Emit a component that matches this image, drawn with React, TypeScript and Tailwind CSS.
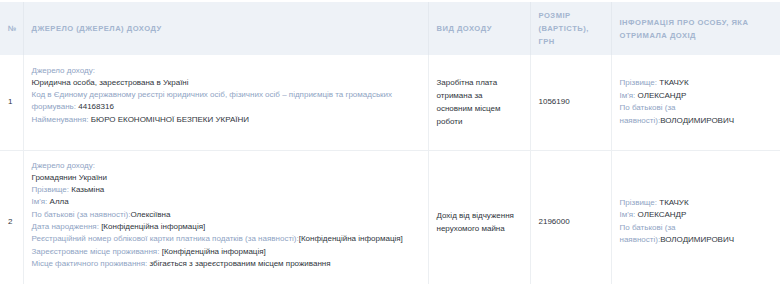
const label = 'text-[#8fa4c4]';
const value = 'text-[#2f353d]';

function Field({ name, children, gap = true }: { name: string; children: React.ReactNode; gap?: boolean }) {
  return (
    <div>
      <span className={label}>{name}{gap ? ' ' : ''}</span>
      <span className={value}>{children}</span>
    </div>
  );
}

function PersonInfo() {
  return (
    <div className="leading-[12.5px]">
      <Field name="Прізвище:">ТКАЧУК</Field>
      <Field name="Ім'я:">ОЛЕКСАНДР</Field>
      <Field name="По батькові (за наявності):" gap={false}>ВОЛОДИМИРОВИЧ</Field>
    </div>
  );
}

const th = 'border-x border-[#e4e9ef] px-2 py-[7px] text-left align-middle text-[7.6px] font-bold uppercase tracking-[0.5px] leading-[13px] text-[#a3b5cf]';
const td = 'border-x border-b border-[#eceff2] px-2 py-[9px] align-middle';

export default function App() {
  return (
    <div className="w-[780px] h-[284px] overflow-hidden bg-white pt-[2px] text-[8px]" style={{ fontFamily: '"Liberation Sans", Arial, sans-serif' }}>
      <table className="w-[780px] table-fixed border-collapse">
        <colgroup>
          <col className="w-[23px]" />
          <col className="w-[405px]" />
          <col className="w-[102px]" />
          <col className="w-[81px]" />
          <col className="w-[169px]" />
        </colgroup>
        <thead>
          <tr className="h-[53px] bg-[#eef2f7]">
            <th className={`${th} border-l-0`}>№</th>
            <th className={th}>Джерело (джерела) доходу</th>
            <th className={th}>Вид доходу</th>
            <th className={th}>Розмір (вартість), грн</th>
            <th className={`${th} border-r-0`}>Інформація про особу, яка отримала дохід</th>
          </tr>
        </thead>
        <tbody>
          <tr className="h-[95px]">
            <td className={`${td} border-l-0 ${value}`}>1</td>
            <td className={td}>
              <div className="pb-[14px] leading-[12.3px]">
                <div className={label}>Джерело доходу:</div>
                <div className={value}>Юридична особа, зареєстрована в Україні</div>
                <Field name="Код в Єдиному державному реєстрі юридичних осіб, фізичних осіб – підприємців та громадських формувань:">44168316</Field>
                <Field name="Найменування:">БЮРО ЕКОНОМІЧНОЇ БЕЗПЕКИ УКРАЇНИ</Field>
              </div>
            </td>
            <td className={`${td} pr-[14px] ${value} leading-[13px]`}>Заробітна плата отримана за основним місцем роботи</td>
            <td className={`${td} ${value}`}>1056190</td>
            <td className={`${td} border-r-0`}>
              <PersonInfo />
            </td>
          </tr>
          <tr>
            <td className={`${td} border-l-0 ${value}`}>2</td>
            <td className={td}>
              <div className="pb-[14px] leading-[12.3px]">
                <div className={label}>Джерело доходу:</div>
                <div className={value}>Громадянин України</div>
                <Field name="Прізвище:">Казьміна</Field>
                <Field name="Ім'я:">Алла</Field>
                <Field name="По батькові (за наявності):" gap={false}>Олексіївна</Field>
                <Field name="Дата народження:">[Конфіденційна інформація]</Field>
                <Field name="Реєстраційний номер облікової картки платника податків (за наявності):" gap={false}>[Конфіденційна інформація]</Field>
                <Field name="Зареєстроване місце проживання:">[Конфіденційна інформація]</Field>
                <Field name="Місце фактичного проживання:">збігається з зареєстрованим місцем проживання</Field>
              </div>
            </td>
            <td className={`${td} pr-[14px] ${value} leading-[13px]`}>Дохід від відчуження нерухомого майна</td>
            <td className={`${td} ${value}`}>2196000</td>
            <td className={`${td} border-r-0`}>
              <PersonInfo />
            </td>
          </tr>
        </tbody>
      </table>
    </div>
  );
}
